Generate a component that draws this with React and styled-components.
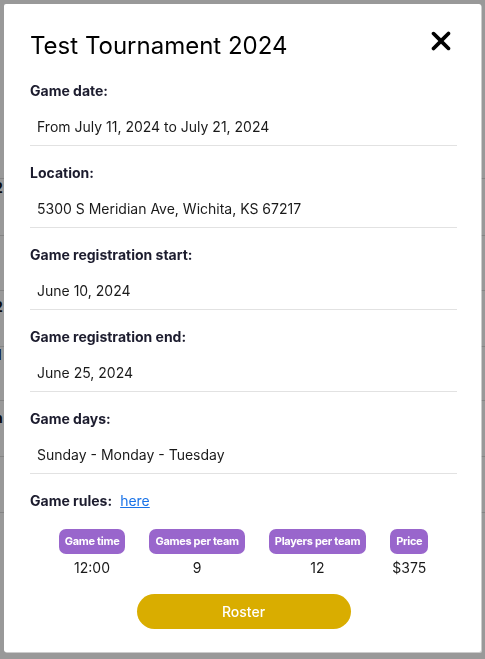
import React from "react";
import styled, { createGlobalStyle } from "styled-components";
import { FaXmark } from "react-icons/fa6";

const Global = createGlobalStyle`
  html, body { margin: 0; padding: 0; }
  body {
    font-family: Inter, "Noto Sans", "Liberation Sans", sans-serif;
    background: #ffffff;
    width: 485px;
    height: 659px;
    overflow: hidden;
  }
  * { box-sizing: border-box; }
`;

const Page = styled.div`
  padding-top: 123px;
  display: flex;
  flex-direction: column;
`;

const PageRow = styled.div`
  height: ${(p) => p.$h}px;
  border-bottom: 1px solid #dcdcdc;
  display: flex;
  align-items: flex-start;
  padding-top: ${(p) => p.$off}px;
  font-size: 14px;
  line-height: 16px;
  font-weight: 700;
  color: #111;
  white-space: nowrap;
`;

const Fragment = styled.span`
  margin-left: -6px;
`;

const Overlay = styled.div`
  position: fixed;
  inset: 0;
  background: rgba(0, 0, 0, 0.4);
  padding: 4px 4px 0 4px;
  display: flex;
  justify-content: center;
  align-items: flex-start;
`;

const Modal = styled.div`
  width: 477px;
  height: 648px;
  background: #fff;
  border-radius: 2px;
  box-shadow: 1px 1px 0 rgba(255, 255, 255, 0.5);
  padding: 27px 24px 24px 26px;
  display: flex;
  flex-direction: column;
`;

const Header = styled.div`
  display: flex;
  justify-content: space-between;
  align-items: flex-start;
`;

const Title = styled.h1`
  margin: 0;
  font-size: 24px;
  line-height: 30px;
  font-weight: 400;
  color: #000;
`;

const Close = styled.button`
  border: none;
  background: none;
  padding: 0;
  margin: -5px 1px 0 0;
  color: #000;
  display: flex;
  cursor: pointer;
`;

const Section = styled.div`
  display: flex;
  flex-direction: column;
  margin-top: ${(p) => p.$top}px;
`;

const Label = styled.div`
  font-size: 14px;
  line-height: 20px;
  font-weight: 700;
  color: #1c1c2e;
  display: flex;
  align-items: center;
  gap: 8px;
`;

const Value = styled.div`
  margin-top: 16px;
  padding: 0 7px 8px 7px;
  font-size: 14px;
  line-height: 20px;
  color: #1a1a1a;
  border-bottom: 1px solid #e2e2e2;
`;

const Link = styled.a`
  font-weight: 400;
  color: #1a73e8;
  text-decoration: underline;
`;

const Stats = styled.div`
  margin-top: 18px;
  display: flex;
  justify-content: center;
  gap: 24px;
`;

const Stat = styled.div`
  display: flex;
  flex-direction: column;
  align-items: center;
  gap: 6px;
`;

const Badge = styled.div`
  background: #9966cc;
  color: #fff;
  font-size: 11px;
  font-weight: 700;
  line-height: 25px;
  height: 25px;
  padding: 0 6px;
  border-radius: 7px;
  letter-spacing: -0.3px;
`;

const StatValue = styled.div`
  font-size: 14px;
  line-height: 16px;
  color: #1a1a1a;
`;

const Footer = styled.div`
  margin-top: 18px;
  display: flex;
  justify-content: center;
`;

const Roster = styled.button`
  width: 214px;
  height: 35px;
  border: none;
  border-radius: 18px;
  background: #d9ad00;
  color: #fff;
  font-family: inherit;
  font-size: 14px;
  font-weight: 500;
  cursor: pointer;
`;

const sections = [
  { label: "Game date:", value: "From July 11, 2024 to July 21, 2024" },
  { label: "Location:", value: "5300 S Meridian Ave, Wichita, KS 67217" },
  { label: "Game registration start:", value: "June 10, 2024" },
  { label: "Game registration end:", value: "June 25, 2024" },
  { label: "Game days:", value: "Sunday - Monday - Tuesday" },
];

const stats = [
  { label: "Game time", value: "12:00" },
  { label: "Games per team", value: "9" },
  { label: "Players per team", value: "12" },
  { label: "Price", value: "$375" },
];

const bgRows = [
  { h: 56, t: "", off: 0 },
  { h: 57, t: "2", off: 1 },
  { h: 55, t: "", off: 0 },
  { h: 56, t: "2", off: 8 },
  { h: 54, t: "ll", off: -2 },
  { h: 56, t: "n", off: 9 },
  { h: 56, t: "", off: 0 },
];

export default function App() {
  return (
    <>
      <Global />
      <Page>
        {bgRows.map((r, i) => (
          <PageRow key={i} $h={r.h} $off={Math.max(r.off, 0)}>
            <Fragment>{r.t}</Fragment>
          </PageRow>
        ))}
      </Page>
      <Overlay>
        <Modal>
          <Header>
            <Title>Test Tournament 2024</Title>
            <Close aria-label="Close">
              <FaXmark size={30} />
            </Close>
          </Header>
          {sections.map((s, i) => (
            <Section key={s.label} $top={i === 0 ? 20 : 17}>
              <Label>{s.label}</Label>
              <Value>{s.value}</Value>
            </Section>
          ))}
          <Section $top={17}>
            <Label>
              Game rules: <Link href="#">here</Link>
            </Label>
          </Section>
          <Stats>
            {stats.map((s) => (
              <Stat key={s.label}>
                <Badge>{s.label}</Badge>
                <StatValue>{s.value}</StatValue>
              </Stat>
            ))}
          </Stats>
          <Footer>
            <Roster>Roster</Roster>
          </Footer>
        </Modal>
      </Overlay>
    </>
  );
}
